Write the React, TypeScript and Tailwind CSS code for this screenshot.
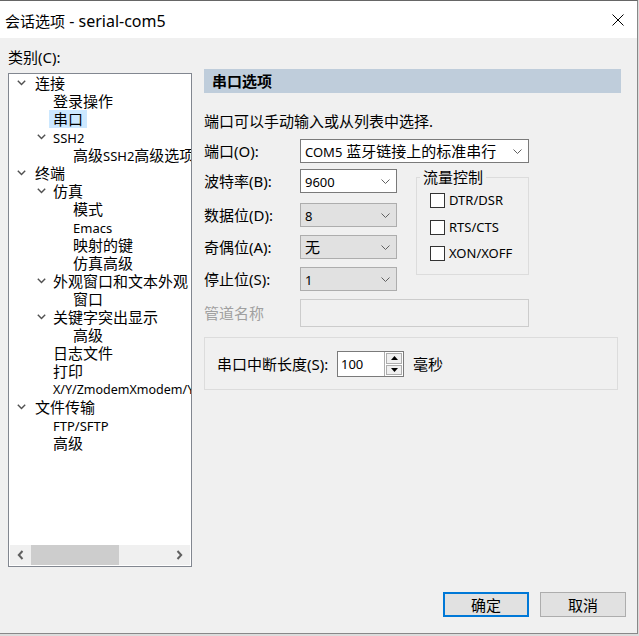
import React from 'react';

const L = ({ children }: { children: React.ReactNode }) => (
  <span className="text-[13px]">{children}</span>
);

function TreeChevron() {
  return (
    <svg width="9" height="6" viewBox="0 0 9 6">
      <path d="M0.8 0.8 L4.5 4.6 L8.2 0.8" fill="none" stroke="#505050" strokeWidth="1.4" />
    </svg>
  );
}

function SelectChevron() {
  return (
    <svg width="9" height="5" viewBox="0 0 9 5">
      <path d="M0.5 0.5 L4.5 4.5 L8.5 0.5" fill="none" stroke="#606060" strokeWidth="1" />
    </svg>
  );
}

type Row = { t: React.ReactNode; l: 1 | 2 | 3; c?: boolean; sel?: boolean };

const rows: Row[] = [
  { t: '连接', l: 1, c: true },
  { t: '登录操作', l: 2 },
  { t: '串口', l: 2, sel: true },
  { t: <L>SSH2</L>, l: 2, c: true },
  { t: <>高级<L>SSH2</L>高级选项</>, l: 3 },
  { t: '终端', l: 1, c: true },
  { t: '仿真', l: 2, c: true },
  { t: '模式', l: 3 },
  { t: <L>Emacs</L>, l: 3 },
  { t: '映射的键', l: 3 },
  { t: '仿真高级', l: 3 },
  { t: '外观窗口和文本外观', l: 2, c: true },
  { t: '窗口', l: 3 },
  { t: '关键字突出显示', l: 2, c: true },
  { t: '高级', l: 3 },
  { t: '日志文件', l: 2 },
  { t: '打印', l: 2 },
  { t: <span className="text-[12.5px]">X/Y/ZmodemXmodem/Ymodem</span>, l: 2 },
  { t: '文件传输', l: 1, c: true },
  { t: <L>FTP/SFTP</L>, l: 2 },
  { t: '高级', l: 2 },
];

function TreeRow({ r }: { r: Row }) {
  let pad = '';
  if (r.c) pad = r.l === 1 ? 'pl-[8px]' : 'pl-[28px]';
  else if (r.sel) pad = 'pl-[40px]';
  else pad = r.l === 1 ? 'pl-[26px]' : r.l === 2 ? 'pl-[44px]' : 'pl-[64px]';
  return (
    <div className={`h-[18px] flex items-center whitespace-nowrap ${pad}`}>
      {r.c && (
        <div className={`${r.l === 1 ? 'w-[18px]' : 'w-[16px]'} flex items-center`}>
          <TreeChevron />
        </div>
      )}
      <span className={r.sel ? 'bg-[#cce8ff] px-[4px] h-[18px] leading-[18px]' : 'leading-[18px]'}>{r.t}</span>
    </div>
  );
}

function Select({ w, white, children }: { w: string; white?: boolean; children: React.ReactNode }) {
  return (
    <div
      className={`${w} h-[24px] flex items-center justify-between pl-[4px] pr-[6px] border ${
        white ? 'bg-white border-[#7a7a7a]' : 'bg-[#e1e1e1] border-[#adadad]'
      }`}
    >
      <span className="whitespace-nowrap leading-[18px]">{children}</span>
      <SelectChevron />
    </div>
  );
}

function FormRow({ label, children, cls = '' }: { label: React.ReactNode; children: React.ReactNode; cls?: string }) {
  return (
    <div className={`flex items-center h-[24px] ${cls}`}>
      <div className="w-[96px] leading-[18px] whitespace-nowrap">{label}</div>
      {children}
    </div>
  );
}

function Check({ label, cls }: { label: string; cls: string }) {
  return (
    <div className={`flex items-center h-[15px] ${cls}`}>
      <div className="w-[15px] h-[15px] border border-[#333333] bg-white" />
      <span className="ml-[4px] text-[13px] leading-[15px]">{label}</span>
    </div>
  );
}

export default function App() {
  return (
    <div className="w-[639px] h-[636px] bg-[#dcdcdc] font-['Noto_Sans','Noto_Sans_CJK_SC',sans-serif] text-[15px] leading-[18px] text-black">
      <div className="w-[638px] h-[634px] border-t border-t-[#666666] border-r border-b border-[#888888] bg-[#f0f0f0] flex flex-col">
        {/* title bar */}
        <div className="h-[37px] bg-white flex items-center justify-between pl-[5px] pr-[13px]">
          <span className="mt-[3px] whitespace-nowrap">
            会话选项<span className="text-[16px]"> - serial-com5</span>
          </span>
          <svg width="12" height="12" viewBox="0 0 12 12" className="mt-[1px]">
            <path d="M0.5 0.5 L11.5 11.5 M11.5 0.5 L0.5 11.5" stroke="#000" strokeWidth="1" />
          </svg>
        </div>

        {/* content */}
        <div className="flex">
          {/* left */}
          <div className="pl-[8px] pt-[10px] flex flex-col">
            <div className="h-[18px] leading-[18px]">类别(C):</div>
            <div className="mt-[7px] w-[184px] h-[494px] border border-[#828790] bg-white flex flex-col">
              <div className="flex-1 overflow-hidden">
                {rows.map((r, i) => (
                  <TreeRow key={i} r={r} />
                ))}
              </div>
              <div className="mx-[1px] mb-[1px] h-[20px] bg-[#f0f0f0] flex items-stretch">
                <div className="w-[21px] flex items-center justify-center">
                  <svg width="7" height="10" viewBox="0 0 7 10">
                    <path d="M5.5 1 L1.8 5 L5.5 9" fill="none" stroke="#606060" strokeWidth="2" />
                  </svg>
                </div>
                <div className="w-[88px] bg-[#cdcdcd]" />
                <div className="flex-1" />
                <div className="w-[21px] flex items-center justify-center">
                  <svg width="7" height="10" viewBox="0 0 7 10">
                    <path d="M1.5 1 L5.2 5 L1.5 9" fill="none" stroke="#606060" strokeWidth="2" />
                  </svg>
                </div>
              </div>
            </div>
          </div>

          {/* right */}
          <div className="ml-[12px] w-[417px] pt-[31px] flex flex-col">
            <div className="h-[24px] bg-[#bfcddb] flex items-center pl-[8px] font-bold">串口选项</div>
            <div className="mt-[19px] h-[18px] leading-[18px] whitespace-nowrap">端口可以手动输入或从列表中选择.</div>

            <FormRow label="端口(O):" cls="mt-[9px]">
              <Select w="w-[229px]" white>
                <L>COM5</L> 蓝牙链接上的标准串行
              </Select>
            </FormRow>

            <div className="mt-[6px] flex items-start">
              <div className="w-[193px] flex flex-col">
                <FormRow label="波特率(B):">
                  <Select w="w-[97px]" white>
                    <L>9600</L>
                  </Select>
                </FormRow>
                <FormRow label="数据位(D):" cls="mt-[10px]">
                  <Select w="w-[97px]">
                    <L>8</L>
                  </Select>
                </FormRow>
                <FormRow label="奇偶位(A):" cls="mt-[8px]">
                  <Select w="w-[97px]">无</Select>
                </FormRow>
                <FormRow label="停止位(S):" cls="mt-[8px]">
                  <Select w="w-[97px]">
                    <L>1</L>
                  </Select>
                </FormRow>
              </div>

              <div className="relative mt-[8px] ml-[19px] w-[113px] h-[98px] border border-[#dcdcdc] pl-[13px] pt-[15px] flex flex-col">
                <span className="absolute top-[-10px] left-[3px] px-[3px] bg-[#f0f0f0] leading-[18px] whitespace-nowrap">
                  流量控制
                </span>
                <Check label="DTR/DSR" cls="" />
                <Check label="RTS/CTS" cls="mt-[12px]" />
                <Check label="XON/XOFF" cls="mt-[11px]" />
              </div>
            </div>

            <div className="mt-[8px] flex items-center h-[28px]">
              <div className="w-[96px] text-[#a0a0a0] leading-[18px]">管道名称</div>
              <div className="w-[229px] h-[28px] border border-[#cccccc] bg-[#f0f0f0]" />
            </div>

            <div className="mt-[10px] w-[414px] h-[53px] border border-[#dcdcdc] flex items-center pl-[12px] pt-[1px]">
              <div className="w-[120px] leading-[18px] whitespace-nowrap">串口中断长度(S):</div>
              <div className="w-[67px] h-[26px] border border-[#7a7a7a] bg-white flex">
                <div className="flex-1 flex items-center pl-[3px]">
                  <L>100</L>
                </div>
                <div className="w-[19px] flex flex-col border-l border-[#adadad] p-[1px] gap-[1px]">
                  <div className="flex-1 bg-[#f0f0f0] border border-[#adadad] flex items-center justify-center">
                    <svg width="7" height="4" viewBox="0 0 7 4">
                      <path d="M0 4 L3.5 0 L7 4 Z" fill="#000" />
                    </svg>
                  </div>
                  <div className="flex-1 bg-[#f0f0f0] border border-[#adadad] flex items-center justify-center">
                    <svg width="7" height="4" viewBox="0 0 7 4">
                      <path d="M0 0 L3.5 4 L7 0 Z" fill="#000" />
                    </svg>
                  </div>
                </div>
              </div>
              <div className="ml-[9px] leading-[18px]">毫秒</div>
            </div>
          </div>
        </div>

        {/* buttons */}
        <div className="mt-[25px] flex justify-end pr-[11px] gap-[11px]">
          <div className="w-[86px] h-[25px] border-2 border-[#0078d7] bg-[#e1e1e1] flex items-center justify-center">确定</div>
          <div className="w-[86px] h-[25px] border border-[#adadad] bg-[#e1e1e1] flex items-center justify-center">取消</div>
        </div>
      </div>
    </div>
  );
}
